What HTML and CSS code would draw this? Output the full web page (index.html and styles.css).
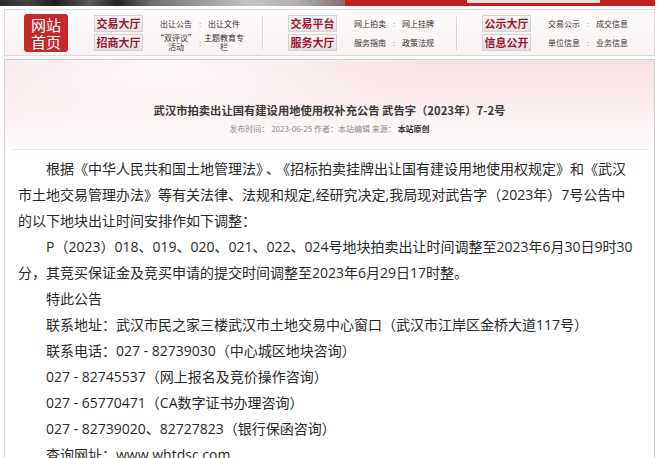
FILE: index.html
```html
<!DOCTYPE html>
<html lang="zh-CN">
<head>
<meta charset="utf-8">
<title>武汉市拍卖出让国有建设用地使用权补充公告</title>
<link rel="stylesheet" href="styles.css">
</head>
<body>
<div class="page">
  <div class="topbar">
    <div class="photo"></div>
    <div class="redband"><div class="searchbox"></div></div>
  </div>

  <div class="nav">
    <a class="logo">网站<br>首页</a>

    <div class="btns">
      <span class="btn">交易大厅</span>
      <span class="btn">招商大厅</span>
    </div>
    <div class="links">
      <span>出让公告</span><span class="colon">:</span><span>出让文件</span>
      <span>“双评议”活动</span><span class="colon">:</span><span>主题教育专栏</span>
    </div>

    <div class="sep"></div>

    <div class="btns">
      <span class="btn">交易平台</span>
      <span class="btn">服务大厅</span>
    </div>
    <div class="links">
      <span>网上拍卖</span><span class="colon">:</span><span>网上挂牌</span>
      <span>服务指南</span><span class="colon">:</span><span>政策法规</span>
    </div>

    <div class="sep"></div>

    <div class="btns">
      <span class="btn">公示大厅</span>
      <span class="btn">信息公开</span>
    </div>
    <div class="links">
      <span>交易公示</span><span class="colon">:</span><span>成交信息</span>
      <span>单位信息</span><span class="colon">:</span><span>业务信息</span>
    </div>
  </div>

  <div class="content">
    <h1 class="title">武汉市拍卖出让国有建设用地使用权补充公告 武告字（2023年）7-2号</h1>
    <div class="meta">发布时间： 2023-06-25 作者：本站编辑 来源： <b>本站原创</b></div>
    <div class="rule"></div>
    <div class="article">
      <p>根据《中华人民共和国土地管理法》<span class="pause">、</span>《招标拍卖挂牌出让国有建设用地使用权规定》和《武汉市土地交易管理办法》等有关法律、法规和规定,经研究决定,我局现对武告字（2023年）7号公告中的以下地块出让时间安排作如下调整：</p>
      <p>P（2023）018、019、020、021、022、024号地块拍卖出让时间调整至2023年6月30日9时30分，其竞买保证金及竞买申请的提交时间调整至2023年6月29日17时整。</p>
      <p>特此公告</p>
      <p>联系地址：武汉市民之家三楼武汉市土地交易中心窗口（武汉市江岸区金桥大道117号）</p>
      <p>联系电话：027 - 82739030（中心城区地块咨询）</p>
      <p>027 - 82745537（网上报名及竞价操作咨询）</p>
      <p>027 - 65770471（CA数字证书办理咨询）</p>
      <p>027 - 82739020、82727823（银行保函咨询）</p>
      <p>查询网址：www.whtdsc.com</p>
    </div>
  </div>
</div>
</body>
</html>
```

FILE: styles.css
```css
html, body {
  margin: 0;
  padding: 0;
  background: #fff;
}

body {
  font-family: "Noto Sans CJK SC", sans-serif;
  color: #333;
}

.page {
  width: 651px;
  margin-left: 4px;
}

/* top strip (bottom edge of the site banner) */
.topbar {
  display: flex;
  height: 6px;
  margin-left: -4px;
  width: 655px;
}

.photo {
  width: 345px;
  background: linear-gradient(90deg, #2a2a2a 0, #444 8%, #1c1c1c 16%, #5a5a5a 26%, #222 34%, #6f6f6f 44%, #9a9a9a 58%, #c4c4c4 72%, #b0b0b0 86%, #8a6a6a 100%);
}

.redband {
  flex: 1;
  display: flex;
  background: #c0211d;
}

.searchbox {
  margin-left: 122px;
  width: 133px;
  height: 3px;
  background: #e8e0e0;
}

/* navigation panel */
.nav {
  box-sizing: border-box;
  height: 47px;
  margin-top: 3px;
  border: 1px solid #e8d6d6;
  background: linear-gradient(#fdfbfb, #f8f2f2);
  display: flex;
  align-items: center;
  padding-left: 19px;
}

.logo {
  box-sizing: border-box;
  width: 44px;
  height: 38px;
  padding-top: 2px;
  border-radius: 3px;
  background: #c5292b;
  color: #fff;
  font-size: 15px;
  line-height: 17px;
  text-align: center;
  margin-right: 26px;
}

.btns {
  display: flex;
  flex-direction: column;
  gap: 2px;
}

.btn {
  box-sizing: border-box;
  width: 49px;
  height: 17px;
  border: 1px solid #d2d2d2;
  background: linear-gradient(#f8f8f8, #e3e3e3);
  color: #a3122f;
  font-size: 11px;
  font-weight: bold;
  line-height: 15px;
  text-align: center;
}

.links {
  margin-left: 13px;
  display: grid;
  grid-template-columns: 40px 8px 40px;
  grid-template-rows: 17px 17px;
  row-gap: 2px;
  align-items: center;
  justify-items: center;
  text-align: center;
  font-size: 8px;
  line-height: 9px;
  color: #333;
}

.links .colon {
  color: #9a9a9a;
}

.sep {
  width: 1px;
  height: 34px;
  background: #d6d6d6;
  box-shadow: 1px 0 0 #fff;
  margin: 0 25px 0 18px;
}

/* content panel */
.content {
  margin-top: 3px;
  border: 1px solid #d0d0d0;
  border-bottom: none;
  min-height: 420px;
  background:
    radial-gradient(ellipse 260px 60px at 160px 10px, rgba(255, 255, 255, 0.75), rgba(255, 255, 255, 0) 100%),
    linear-gradient(#f9e1e5 0, #fcedef 45px, #fff 95px);
}

.title {
  margin: 0;
  padding-top: 40px;
  font-size: 11.3px;
  line-height: 20px;
  font-weight: bold;
  color: #3a3a3a;
  text-align: center;
}

.meta {
  margin-top: 1px;
  font-size: 8px;
  line-height: 16px;
  color: #8a8a8a;
  text-align: center;
}

.meta b {
  color: #333;
}

.rule {
  margin: 12px 6px 0 7px;
  height: 1px;
  background: #efe6e6;
}

.article {
  padding: 6px 19px 0 13px;
  font-family: "Open Sans", "Noto Sans CJK SC", sans-serif;
  font-size: 14px;
  line-height: 26px;
  color: #2a2a2a;
}

.article p {
  margin: 0;
  text-indent: 2em;
}

.article .pause {
  margin: 0 3px;
}
```
